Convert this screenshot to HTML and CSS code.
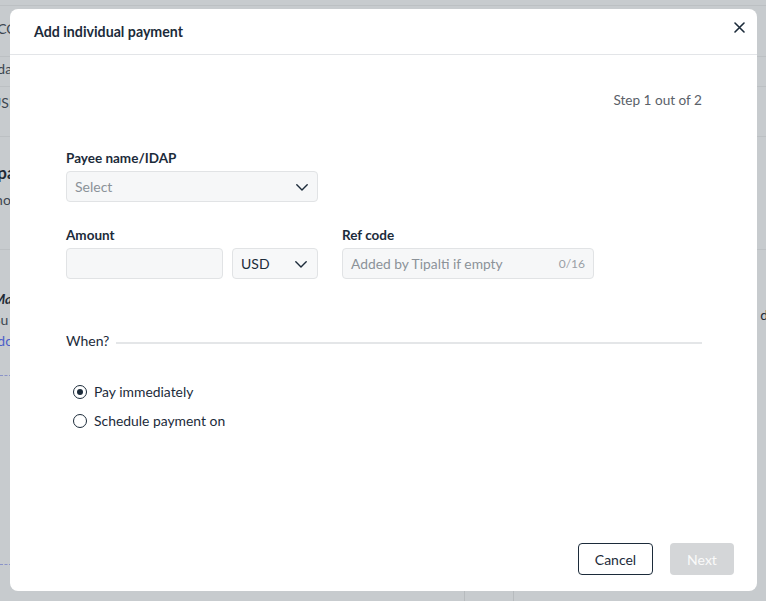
FILE: index.html
```html
<!DOCTYPE html>
<html>
<head>
<meta charset="utf-8">
<link rel="stylesheet" href="styles.css">
</head>
<body>
<div class="page">
  <div class="bg-row bg-top"><span class="bg-text">ACC</span></div>
  <div class="bg-row bg-r1"><span class="bg-text">Ada</span></div>
  <div class="bg-row bg-r2"><span class="bg-text">USD</span></div>
  <div class="bg-row bg-section">
    <span class="bg-text bg-big">Cpa</span>
    <span class="bg-text">Uno</span>
  </div>
  <div class="bg-row bg-section2">
    <div class="bg-split">
      <div>
        <span class="bg-text bg-bold">Ma</span>
        <span class="bg-text">Su</span>
        <span class="bg-text bg-link">Adc</span>
      </div>
      <div class="bg-right"><span class="bg-text">d</span></div>
    </div>
    <div class="bg-dash"></div>
  </div>
  <div class="bg-row bg-rest"><div class="bg-dash"></div></div>
  <div class="bg-bottom"><span class="bg-col"></span><span class="bg-col"></span></div>
</div>

<div class="modal">
  <div class="modal-header">
    <h1 class="modal-title">Add individual payment</h1>
    <button class="close" aria-label="Close">
      <svg width="11" height="11" viewBox="0 0 11 11"><path d="M1 1L10 10M10 1L1 10" stroke="#1c2b3a" stroke-width="1.6" stroke-linecap="round"/></svg>
    </button>
  </div>
  <div class="modal-body">
    <div class="step">Step 1 out of 2</div>

    <div class="field">
      <label class="label">Payee name/IDAP</label>
      <div class="select payee">
        <span class="placeholder">Select</span>
        <svg class="chev" width="12" height="7" viewBox="0 0 12 7"><path d="M0.8 0.8L6 6L11.2 0.8" fill="none" stroke="#1c2b3a" stroke-width="1.4" stroke-linecap="round" stroke-linejoin="round"/></svg>
      </div>
    </div>

    <div class="row2">
      <div class="field">
        <label class="label">Amount</label>
        <div class="amount-row">
          <div class="input amount"></div>
          <div class="select currency">
            <span class="value">USD</span>
            <svg class="chev" width="12" height="7" viewBox="0 0 12 7"><path d="M0.8 0.8L6 6L11.2 0.8" fill="none" stroke="#1c2b3a" stroke-width="1.4" stroke-linecap="round" stroke-linejoin="round"/></svg>
          </div>
        </div>
      </div>
      <div class="field">
        <label class="label">Ref code</label>
        <div class="input ref">
          <span class="placeholder">Added by Tipalti if empty</span>
          <span class="counter">0/16</span>
        </div>
      </div>
    </div>

    <div class="when">
      <span class="when-label">When?</span>
      <span class="when-line"></span>
    </div>

    <div class="radios">
      <label class="radio"><span class="dot checked"></span>Pay immediately</label>
      <label class="radio"><span class="dot"></span>Schedule payment on</label>
    </div>
  </div>
  <div class="modal-footer">
    <button class="btn cancel">Cancel</button>
    <button class="btn next">Next</button>
  </div>
</div>
</body>
</html>
```
FILE: styles.css
```css
* { box-sizing: border-box; }
html, body { margin: 0; padding: 0; }
body {
  width: 766px;
  height: 601px;
  overflow: hidden;
  background: #c7cbce;
  font-family: Lato, "Open Sans", sans-serif;
  color: #1c2b3a;
  position: relative;
}

/* background page (dimmed) */
.page { width: 766px; height: 601px; display: flex; flex-direction: column; }
.bg-row { border-bottom: 1px solid #bcc0c3; display: flex; flex-direction: column; }
.bg-text { font-size: 14px; color: #3c4650; margin-left: -12px; line-height: 20px; white-space: nowrap; }
.bg-top { height: 52px; border-top: 1px solid #bcc0c3; margin-top: 5px; padding-top: 13px; }
.bg-top .bg-text { margin-left: -12px; }
.bg-r1 { height: 30px; padding-top: 2px; }
.bg-r1 .bg-text { margin-left: -12px; }
.bg-r2 { height: 50px; padding-top: 6px; }
.bg-r2 .bg-text { margin-left: -9px; }
.bg-section { height: 113px; padding-top: 26px; }
.bg-big { font-size: 17px; font-weight: 700; color: #1e2a36; margin-left: -14px; }
.bg-section .bg-text + .bg-text { margin-top: 7px; margin-left: -15px; }
.bg-section2 { height: 130px; padding-top: 38px; border-bottom: none; }
.bg-split { display: flex; justify-content: space-between; }
.bg-split > div { display: flex; flex-direction: column; }
.bg-bold { font-weight: 700; font-style: italic; color: #1e2a36; margin-left: -7px !important; }
.bg-split .bg-text { line-height: 21px; }
.bg-split .bg-text:nth-child(2) { margin-left: -7px; }
.bg-link { color: #4d5fc9; margin-left: -12px; }
.bg-right { padding-top: 16px; }
.bg-right .bg-text { margin-left: 0; margin-right: -2px; color: #1e2a36; }
.bg-dash { margin-top: 24px; width: 12px; border-top: 1px dashed #8a93c8; }
.bg-rest { flex: 1; border-bottom: none; padding-top: 160px; }
.bg-bottom { height: 10px; display: flex; padding-left: 464px; gap: 48px; }
.bg-col { width: 1px; height: 10px; background: #b7bbbe; }

/* modal */
.modal {
  position: absolute;
  left: 10px;
  top: 9px;
  width: 747px;
  height: 582px;
  background: #fff;
  border-radius: 8px;
  display: flex;
  flex-direction: column;
}
.modal-header {
  height: 46px;
  border-bottom: 1px solid #e3e5e8;
  display: flex;
  align-items: center;
  justify-content: space-between;
  padding: 0 12px 0 24px;
}
.modal-title { margin: 0; font-size: 14.2px; font-weight: 700; color: #1c2b3a; }
.close {
  border: none; background: none; padding: 0; width: 11px; height: 11px;
  display: flex; align-items: center; justify-content: center;
  align-self: flex-start; margin-top: 13px;
}

.modal-body { flex: 1; padding: 35px 55px 0 56px; display: flex; flex-direction: column; }
.step { text-align: right; font-size: 13.6px; line-height: 20px; color: #5a6169; }

.field { display: flex; flex-direction: column; }
.label { font-size: 13.5px; font-weight: 700; line-height: 20px; color: #1c2b3a; margin-bottom: 3px; }
.modal-body > .field { margin-top: 38px; }

.select, .input {
  height: 31px;
  border: 1px solid #e1e3e5;
  border-radius: 4px;
  background: #f6f7f8;
  display: flex;
  align-items: center;
  font-size: 14px;
}
.payee { width: 252px; padding: 0 9px 0 8px; justify-content: space-between; }
.placeholder { color: #8b9298; }
.chev { margin-top: 1px; }

.row2 { display: flex; gap: 24px; margin-top: 23px; }
.amount-row { display: flex; gap: 9px; }
.amount { width: 157px; }
.currency { width: 86px; padding: 0 10px 0 8px; justify-content: space-between; background: #f7f8f9; }
.value { color: #1c2b3a; }
.ref { width: 252px; padding: 0 8px 0 8px; justify-content: space-between; font-size: 13.8px; }
.counter { font-size: 12px; color: #9aa0a6; }

.when { display: flex; align-items: center; margin-top: 52px; }
.when-label { font-size: 14px; line-height: 20px; color: #1c2b3a; margin-right: 7px; }
.when-line { flex: 1; height: 2px; background: #e4e6e8; margin-top: 4px; }

.radios { display: flex; flex-direction: column; margin-top: 31px; gap: 9px; }
.radio { display: flex; align-items: center; font-size: 13.9px; line-height: 20px; color: #1c2b3a; }
.dot {
  width: 14px; height: 14px; border: 1.5px solid #1c2b3a; border-radius: 50%;
  margin: 0 7px 0 7px; display: flex; align-items: center; justify-content: center;
}
.dot.checked::after { content: ""; width: 6px; height: 6px; border-radius: 50%; background: #1c2b3a; }

.modal-footer { display: flex; justify-content: flex-end; gap: 17px; padding: 0 23px 16px 0; }
.btn {
  height: 32px; border-radius: 4px; font-family: Lato, sans-serif; font-size: 14px;
  display: flex; align-items: center; justify-content: center; padding: 0;
}
.cancel { width: 75px; border: 1px solid #1c2b3a; background: #fff; color: #1c2b3a; }
.next { width: 64px; border: none; background: #d4d6d8; color: #fafafa; }
```
